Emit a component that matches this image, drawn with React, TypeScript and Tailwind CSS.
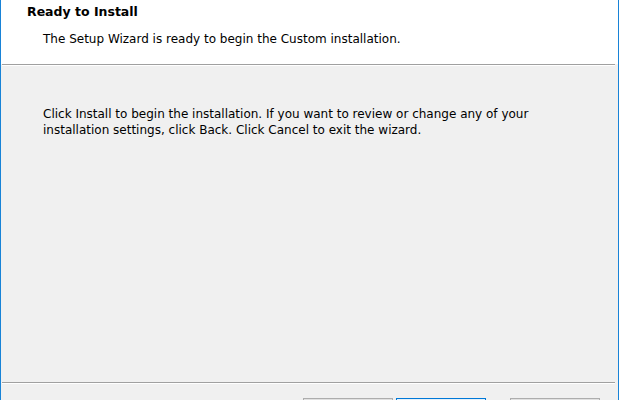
export default function App() {
  const font = { fontFamily: '"DejaVu Sans", Verdana, sans-serif' };
  return (
    <div
      className="flex h-[400px] w-[620px] overflow-hidden bg-white text-[12px] leading-[16px] text-black"
      style={font}
    >
      <div className="w-px bg-[#1883d7]" />
      <div className="flex flex-1 flex-col">
        <div className="h-[64px] bg-white pl-[26px] pt-[4px]">
          <div className="text-[12.5px] font-bold">Ready to Install</div>
          <div className="ml-[16px] mt-[11px]">
            The Setup Wizard is ready to begin the Custom installation.
          </div>
        </div>
        <div className="bg-[#f0f0f0] pl-px pr-[3px]">
          <div className="h-px bg-[#a0a0a0]" />
          <div className="h-px bg-white" />
        </div>
        <div className="flex-1 bg-[#f0f0f0] pl-[42px] pt-[40px]">
          <p className="w-[520px]">
            Click Install to begin the installation. If you want to review or change any of your
            installation settings, click Back. Click Cancel to exit the wizard.
          </p>
        </div>
        <div className="bg-[#f0f0f0] pl-px pr-[3px]">
          <div className="h-px bg-[#a0a0a0]" />
          <div className="h-px bg-white" />
        </div>
        {/* buttons sit mostly below the visible edge */}
        <div className="flex h-[16px] items-start justify-end bg-[#f0f0f0] pr-[18px] pt-[14px]">
          <button aria-label="< Back" className="h-[23px] w-[90px] border border-[#adadad] bg-[#e1e1e1]" />
          <button aria-label="Install" className="ml-[3px] h-[23px] w-[90px] border border-[#0078d7] bg-[#e5f1fb]" />
          <button aria-label="Cancel" className="ml-[24px] h-[23px] w-[90px] border border-[#adadad] bg-[#e1e1e1]" />
        </div>
      </div>
      <div className="w-px bg-[#1883d7]" />
      <div className="w-px bg-white" />
    </div>
  );
}
